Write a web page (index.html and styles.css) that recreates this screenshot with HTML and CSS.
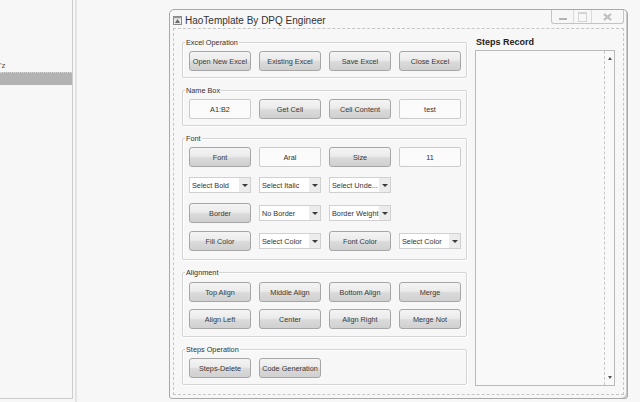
FILE: index.html
```html
<!DOCTYPE html>
<html lang="en">
  <head>
    <meta charset="UTF-8" />
    <title>HaoTemplate By DPQ Engineer</title>
    <link rel="stylesheet" href="styles.css">
  </head>
  <body>
    <!-- project tree on the left (mostly empty) -->
    <div class="sidebar">
      <div class="tree-row">'z</div>
      <div class="tree-row selected"></div>
    </div>
    <div class="splitter"></div>

    <div class="window">
      <div class="titlebar">
        <svg class="app-icon" width="9" height="9" viewBox="0 0 9 9">
          <rect x="0.5" y="0.5" width="8" height="8" fill="#e9e9e9" stroke="#8a8a8a" />
          <path d="M2 7 L4.5 3 L7 7 Z" fill="#6a6a6a" />
          <rect x="1" y="1" width="7" height="1.2" fill="#9a9a9a" />
        </svg>
        <span class="title">HaoTemplate By DPQ Engineer</span>
        <div class="win-controls">
          <span class="ctl min"><i></i></span>
          <span class="ctl max"><i></i></span>
          <span class="ctl close">
            <svg width="9" height="8" viewBox="0 0 9 8">
              <path d="M1 1 L8 7 M8 1 L1 7" stroke="#a8a8a8" stroke-width="1.8" fill="none" />
              <path d="M1 1 L8 7 M8 1 L1 7" stroke="#e6e6e6" stroke-width="0.6" fill="none" />
            </svg>
          </span>
        </div>
      </div>

      <div class="content">
        <div class="left-col">
          <div class="group">
            <span class="group-title">Excel Operation</span>
            <div class="row">
              <button class="btn">Open New Excel</button>
              <button class="btn">Existing Excel</button>
              <button class="btn">Save Excel</button>
              <button class="btn">Close Excel</button>
            </div>
          </div>

          <div class="group">
            <span class="group-title">Name Box</span>
            <div class="row">
              <div class="field">A1:B2</div>
              <button class="btn">Get Cell</button>
              <button class="btn">Cell Content</button>
              <div class="field">test</div>
            </div>
          </div>

          <div class="group font-group">
            <span class="group-title">Font</span>
            <div class="row">
              <button class="btn">Font</button>
              <div class="field">Aral</div>
              <button class="btn">Size</button>
              <div class="field">11</div>
            </div>
            <div class="row">
              <div class="combo"><span>Select Bold</span><b class="drop"></b></div>
              <div class="combo"><span>Select Italic</span><b class="drop"></b></div>
              <div class="combo"><span>Select Unde...</span><b class="drop"></b></div>
            </div>
            <div class="row">
              <button class="btn">Border</button>
              <div class="combo"><span>No Border</span><b class="drop"></b></div>
              <div class="combo"><span>Border Weight</span><b class="drop"></b></div>
            </div>
            <div class="row">
              <button class="btn">Fill Color</button>
              <div class="combo"><span>Select Color</span><b class="drop"></b></div>
              <button class="btn">Font Color</button>
              <div class="combo"><span>Select Color</span><b class="drop"></b></div>
            </div>
          </div>

          <div class="group align-group">
            <span class="group-title">Alignment</span>
            <div class="row">
              <button class="btn">Top Align</button>
              <button class="btn">Middle Align</button>
              <button class="btn">Bottom Align</button>
              <button class="btn">Merge</button>
            </div>
            <div class="row">
              <button class="btn">Align Left</button>
              <button class="btn">Center</button>
              <button class="btn">Align Right</button>
              <button class="btn">Merge Not</button>
            </div>
          </div>

          <div class="group">
            <span class="group-title">Steps Operation</span>
            <div class="row">
              <button class="btn">Steps-Delete</button>
              <button class="btn">Code Generation</button>
            </div>
          </div>
        </div>

        <div class="right-col">
          <div class="record-title">Steps Record</div>
          <div class="record-box">
            <div class="record-text"></div>
            <div class="vscroll">
              <span class="arrow up"></span>
              <span class="arrow down"></span>
            </div>
          </div>
        </div>
      </div>
    </div>
  </body>
</html>
```

FILE: styles.css
```css
body {
  margin: 0;
  height: 402px;
  overflow: hidden;
  display: flex;
  align-items: flex-start;
  background-color: #f7f7f7;
  color: #333;
  font-family: "Liberation Sans", Arial, sans-serif;
}

/* left tree panel */
.sidebar {
  box-sizing: border-box;
  width: 73px;
  height: 399px;
  padding-top: 59px;
  border-right: 1px solid #cdcdcd;
  border-bottom: 1px solid #cbcbcb;
}

.tree-row {
  height: 13px;
  line-height: 13px;
  font-size: 8px;
  white-space: nowrap;
  color: #555;
}

.selected {
  background-color: #b3b3b3;
  border-top: 1px dotted #d6d6d6;
  box-sizing: border-box;
}

.splitter {
  width: 2px;
  height: 402px;
  margin-left: 2px;
  background-color: #e3e3e3;
}

/* the frame */
.window {
  box-sizing: border-box;
  width: 459px;
  height: 390px;
  margin: 9px 0 0 92px;
  padding: 0 3px 3px;
  border: 1px solid #a9a9a9;
  border-radius: 5px 5px 3px 3px;
  box-shadow: inset -4px -3px 0 -3px #c9c9c9;
  display: flex;
  flex-direction: column;
}

.titlebar {
  height: 18px;
  flex: none;
  display: flex;
  align-items: center;
}

.app-icon {
  display: block;
  margin-top: 3px;
}

.title {
  margin-left: 3px;
  margin-top: 2px;
  font-size: 10px;
  color: #333;
}

.win-controls {
  margin-left: auto;
  align-self: flex-start;
  display: flex;
  height: 13px;
  border: 1px solid #c4c4c4;
  border-top: 0;
  border-radius: 0 0 3px 3px;
}

.ctl {
  display: flex;
  align-items: center;
  justify-content: center;
}

.ctl.min {
  width: 21px;
}

.ctl.min i {
  width: 8px;
  height: 2px;
  margin-top: 4px;
  background-color: #b4b4b4;
}

.ctl.max {
  width: 17px;
  border-left: 1px solid #dadada;
  border-right: 1px solid #dadada;
}

.ctl.max i {
  width: 7px;
  height: 7px;
  border: 1px solid #d4d4d4;
  border-top-width: 2px;
}

.ctl.close {
  width: 31px;
}

.ctl.close svg {
  display: block;
}

.content {
  flex: 1;
  display: flex;
  gap: 8px;
  padding: 13px 8px 7px;
  border: 1px dashed #c6c6c6;
}

/* group boxes */
.left-col {
  width: 285px;
  display: flex;
  flex-direction: column;
  gap: 12px;
}

.group {
  position: relative;
  padding: 8px 5px 6px 6px;
  border: 1px solid #d4d4d4;
  border-radius: 2px;
  box-shadow: inset 1px 1px 0 #fff, 1px 1px 0 #fff;
}

.font-group {
  padding-bottom: 8px;
}

.align-group {
  padding-top: 9px;
  padding-bottom: 7px;
}

.group-title {
  position: absolute;
  top: -5px;
  left: 2px;
  padding: 0 1px;
  background-color: #f7f7f7;
  font-size: 7.3px;
  line-height: 9px;
  color: #333;
}

.row {
  display: grid;
  grid-template-columns: repeat(4, 62px);
  column-gap: 8px;
  height: 20px;
  align-items: center;
}

.row + .row {
  margin-top: 8px;
}

.align-group .row + .row {
  margin-top: 7px;
}

.btn {
  box-sizing: border-box;
  height: 20px;
  padding: 0;
  border: 1px solid #a6a6a6;
  border-radius: 3px;
  background: linear-gradient(#f4f4f4 0%, #ebebeb 45%, #dadada 55%, #d0d0d0 100%);
  font-family: "Liberation Sans", Arial, sans-serif;
  font-size: 7.3px;
  color: #3a3a3a;
  white-space: nowrap;
}

.field {
  box-sizing: border-box;
  height: 20px;
  border: 1px solid #cbcbcb;
  border-radius: 2px;
  background-color: #fbfbfb;
  display: flex;
  align-items: center;
  justify-content: center;
  font-size: 7.3px;
}

.combo {
  box-sizing: border-box;
  height: 16px;
  border: 1px solid #d0d0d0;
  background-color: #fff;
  display: flex;
  align-items: center;
  font-size: 7.3px;
  white-space: nowrap;
}

.combo span {
  flex: 1;
  padding-left: 2px;
  overflow: hidden;
}

.drop {
  width: 11px;
  height: 100%;
  background-color: #ececec;
  display: flex;
  align-items: center;
  justify-content: center;
}

.drop::after {
  content: "";
  border-left: 3px solid transparent;
  border-right: 3px solid transparent;
  border-top: 3px solid #3a3a3a;
}

/* right side: steps record */
.right-col {
  width: 140px;
  margin-top: -6px;
}

.record-title {
  height: 12px;
  line-height: 12px;
  padding-left: 1px;
  margin-bottom: 2px;
  font-size: 9px;
  font-weight: bold;
  color: #222;
}

.record-box {
  box-sizing: border-box;
  height: 336px;
  display: flex;
  border: 1px solid #b9b9b9;
  background-color: #f9f9f9;
}

.record-text {
  flex: 1;
}

.vscroll {
  width: 9px;
  border-left: 1px dashed #c8c8c8;
  display: flex;
  flex-direction: column;
  justify-content: space-between;
  align-items: center;
  padding: 6px 0;
}

.arrow {
  width: 0;
  height: 0;
  border-left: 2.5px solid transparent;
  border-right: 2.5px solid transparent;
}

.arrow.up {
  border-bottom: 3px solid #555;
}

.arrow.down {
  border-top: 3px solid #555;
}
```
